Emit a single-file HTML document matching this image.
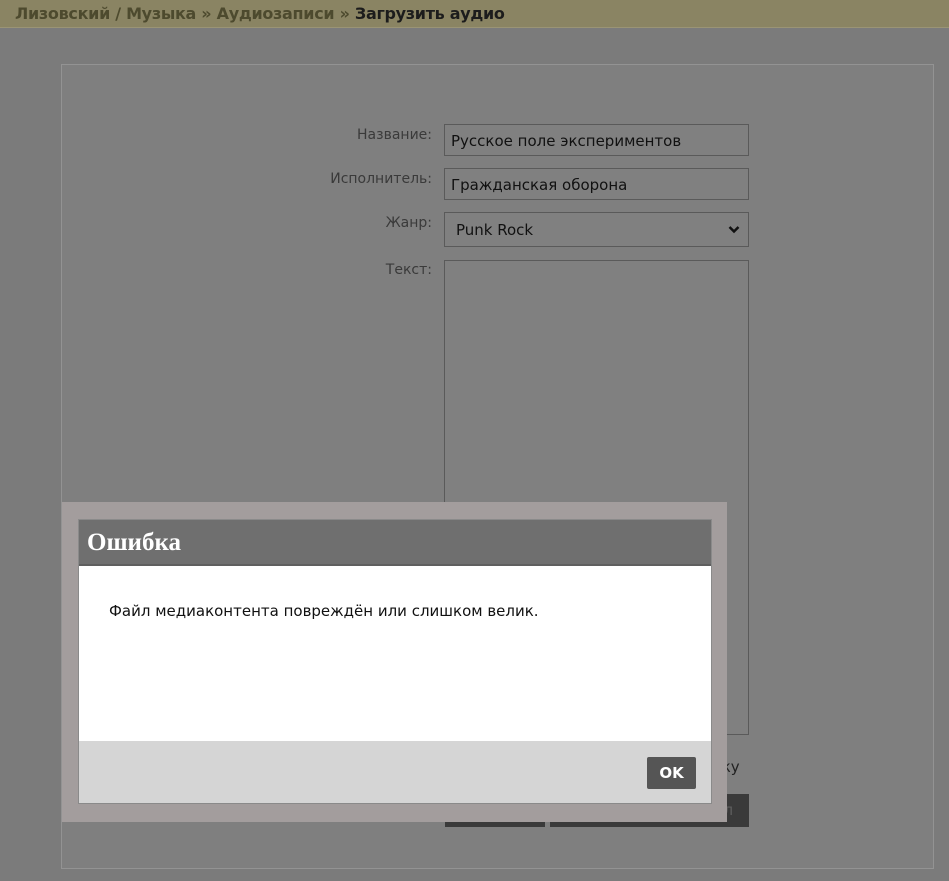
<!DOCTYPE html>
<html><head><meta charset="utf-8"><style>
*{box-sizing:border-box;margin:0;padding:0}
body{width:949px;height:881px;background:#7b7b7b;font-family:"DejaVu Sans","Liberation Sans",sans-serif;position:relative;overflow:hidden}
.hdr{position:absolute;left:0;top:0;width:949px;height:28px;background:#8a8463;border-bottom:1px solid #9a9475}
.hdr span{position:absolute;left:15px;top:4px;font-size:16px;font-weight:bold;color:#4d4a2e;letter-spacing:-0.3px}
.hdr b{color:#1c1c1c}
.panel{position:absolute;left:61px;top:64px;width:873px;height:805px;background:#7f7f7f;border:1px solid #939393}
.lbl{position:absolute;right:517px;font-size:14px;color:#3a3a3a;text-align:right}
.inp{position:absolute;left:444px;width:305px;height:32px;border:1px solid #5a5a5a;background:#808080;font-size:15px;color:#111;padding:7px 6px}
.btn{position:absolute;top:794px;height:33px;background:#3a3a3a;color:#5e5e5e;font-size:15px;padding:7px 9px}
.frame{position:absolute;left:62px;top:502px;width:665px;height:320px;background:#a39d9d}
.dlg{position:absolute;left:78px;top:519px;width:634px;height:285px;border:1px solid #8a8a8a;background:#fff}
.tt{height:46px;background:#6f6f6f;border-bottom:2px solid #5f5f5f;color:#fff;font-family:"Liberation Serif",serif;font-weight:bold;font-size:25px;padding:9px 8px}
.msg{position:absolute;left:30px;top:82px;font-size:15px;color:#111}
.ft{position:absolute;left:0;top:221px;width:632px;height:62px;background:#d5d5d5}
.ok{position:absolute;left:568px;top:16px;width:49px;height:32px;background:#555;color:#fff;font-size:15px;font-weight:bold;text-align:center;line-height:32px;border-radius:2px}
</style></head><body>
<div class="hdr"><span>Лизовский / Музыка » Аудиозаписи » <b>Загрузить аудио</b></span></div>
<div class="panel"></div>
<div class="lbl" style="top:127px">Название:</div>
<div class="inp" style="top:124px">Русское поле экспериментов</div>
<div class="lbl" style="top:171px">Исполнитель:</div>
<div class="inp" style="top:168px">Гражданская оборона</div>
<div class="lbl" style="top:215px">Жанр:</div>
<div class="inp" style="top:212px;height:35px;padding:8px 11px">Punk Rock<svg style="position:absolute;right:8px;top:12px" width="12" height="9" viewBox="0 0 12 9"><path d="M1.5 2 L6 6.5 L10.5 2" stroke="#111" stroke-width="2.5" fill="none"/></svg></div>
<div class="lbl" style="top:262px">Текст:</div>
<div class="inp" style="top:260px;height:475px"></div>
<div style="position:absolute;left:712px;top:758px;font-size:15px;color:#222">ику</div>
<div class="btn" style="left:445px;width:100px">Загрузить</div>
<div class="btn" style="left:550px;width:199px">Выбрать другой файл</div>
<div class="frame"></div>
<div class="dlg">
<div class="tt">Ошибка</div>
<div class="msg">Файл медиаконтента повреждён или слишком велик.</div>
<div class="ft"><div class="ok">OK</div></div>
</div>
</body></html>
